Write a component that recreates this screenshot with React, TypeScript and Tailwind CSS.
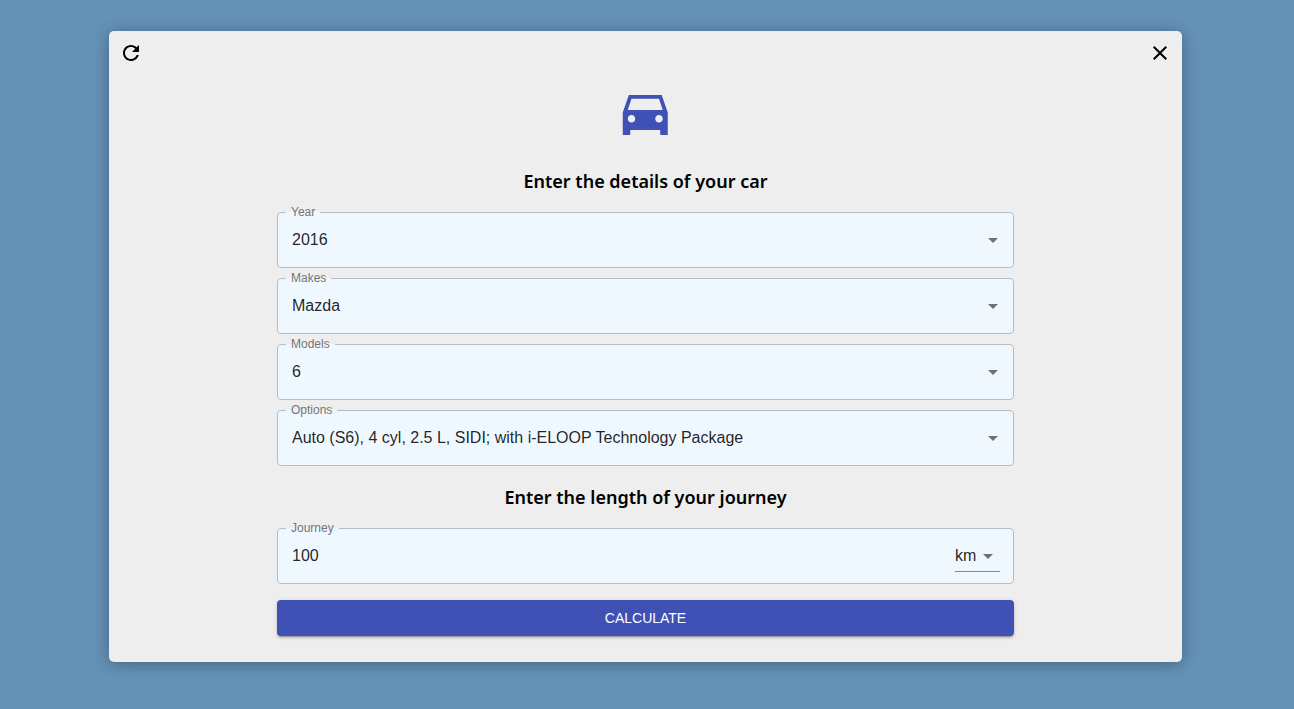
import { useState } from "react";
import type { ReactNode } from "react";

function Caret() {
  return (
    <svg viewBox="0 0 24 24" className="pointer-events-none col-start-1 row-start-1 size-6 justify-self-end fill-black/54" aria-hidden="true">
      <path d="M7 10l5 5 5-5z" />
    </svg>
  );
}

function Field({ id, label, children }: { id: string; label: string; children: ReactNode }) {
  return (
    <fieldset className="h-[62px] min-w-0 rounded-[4px] border border-[#b4bdc5] bg-[#f0f8ff]">
      <legend className="ml-2 px-[5px] text-xs leading-3 text-[#757575]">
        <label htmlFor={id} className="block">{label}</label>
      </legend>
      {children}
    </fieldset>
  );
}

function SelectField({ id, label, options }: { id: string; label: string; options: string[] }) {
  return (
    <Field id={id} label={label}>
      <div className="grid h-11 items-center pr-2">
        <select
          id={id}
          className="col-start-1 row-start-1 h-full w-full cursor-pointer appearance-none bg-transparent pr-8 pl-[14px] text-base text-black/87 outline-none"
        >
          {options.map((option) => (
            <option key={option}>{option}</option>
          ))}
        </select>
        <Caret />
      </div>
    </Field>
  );
}

function Heading({ children }: { children: ReactNode }) {
  return (
    <h3 className="text-center font-['Noto_Sans',sans-serif] text-lg leading-6 font-semibold text-black">{children}</h3>
  );
}

export default function App() {
  const [journey, setJourney] = useState("100");
  return (
    <div className="min-h-screen bg-[#6491b6] pt-[31px] pr-28 pb-[47px] pl-[109px] font-['Liberation_Sans',Arial,sans-serif]">
      <main className="rounded-[5px] bg-[#eeeeee] px-[10px] pt-[10px] pb-[26px] shadow-[0_2px_15px_0_rgba(0,0,0,0.3)]">
        <div className="flex justify-between">
          <button type="button" aria-label="Reset" className="cursor-pointer">
            <svg viewBox="0 0 24 24" className="size-6 fill-black">
              <path d="M17.65 6.35C16.2 4.9 14.21 4 12 4c-4.42 0-7.99 3.58-7.99 8s3.57 8 7.99 8c3.73 0 6.84-2.55 7.73-6h-2.08c-.82 2.33-3.04 4-5.65 4-3.31 0-6-2.69-6-6s2.69-6 6-6c1.66 0 3.14.69 4.22 1.78L13 11h7V4l-2.35 2.35z" />
            </svg>
          </button>
          <button type="button" aria-label="Close" className="cursor-pointer">
            <svg viewBox="0 0 24 24" className="size-6 fill-black">
              <path d="M19 6.41L17.59 5 12 10.59 6.41 5 5 6.41 10.59 12 5 17.59 6.41 19 12 13.41 17.59 19 19 17.59 13.41 12z" />
            </svg>
          </button>
        </div>
        <form className="mx-auto flex max-w-[737px] flex-col pt-[18px]" onSubmit={(event) => event.preventDefault()}>
          <svg viewBox="0.3 0.2 24 24" className="size-[60px] self-center fill-[#3f51b5]" aria-hidden="true">
            <path d="M18.58 5H5.43L3 12v9h3v-2h12v2h3v-9l-2.42-7zM6.5 16c-.83 0-1.5-.67-1.5-1.5S5.67 13 6.5 13s1.5.67 1.5 1.5S7.33 16 6.5 16zm11 0c-.83 0-1.5-.67-1.5-1.5s.67-1.5 1.5-1.5 1.5.67 1.5 1.5-.67 1.5-1.5 1.5zM5 11l1.5-4.5h11L19 11H5z" />
          </svg>
          <div className="pt-[26px] pb-[13px]">
            <Heading>Enter the details of your car</Heading>
          </div>
          <div className="flex flex-col gap-1">
            <SelectField id="year" label="Year" options={["2016"]} />
            <SelectField id="makes" label="Makes" options={["Mazda"]} />
            <SelectField id="models" label="Models" options={["6"]} />
            <SelectField
              id="options"
              label="Options"
              options={["Auto (S6), 4 cyl, 2.5 L, SIDI; with i-ELOOP Technology Package"]}
            />
          </div>
          <div className="pt-[19px] pb-[13px]">
            <Heading>Enter the length of your journey</Heading>
          </div>
          <Field id="journey" label="Journey">
            <div className="flex h-11 items-center pr-[13px]">
              <input
                id="journey"
                type="text"
                inputMode="numeric"
                value={journey}
                onChange={(event) => setJourney(event.target.value)}
                className="h-full min-w-0 flex-1 bg-transparent pl-[14px] text-base text-black/87 outline-none"
              />
              <div className="grid h-8 w-[45px] items-center border-b border-[#868b8f]">
                <select
                  aria-label="Unit"
                  className="col-start-1 row-start-1 h-full w-full cursor-pointer appearance-none bg-transparent pr-5 text-base text-black/87 outline-none"
                >
                  <option>km</option>
                  <option>mi</option>
                </select>
                <Caret />
              </div>
            </div>
          </Field>
          <button
            type="submit"
            className="mt-4 h-9 cursor-pointer rounded-[4px] bg-[#3f51b5] text-sm text-white uppercase shadow-[0_3px_1px_-2px_rgba(0,0,0,0.2),0_2px_2px_0_rgba(0,0,0,0.14),0_1px_5px_0_rgba(0,0,0,0.12)]"
          >
            Calculate
          </button>
        </form>
      </main>
    </div>
  );
}
